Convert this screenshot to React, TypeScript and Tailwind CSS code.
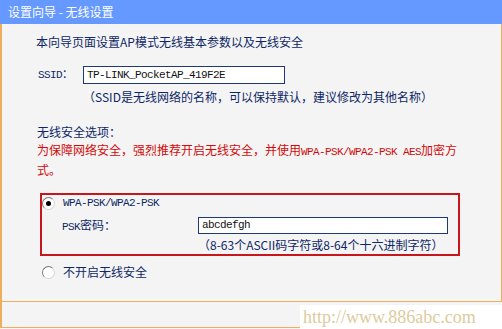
const cjk = "font-['Noto_Sans_CJK_SC',sans-serif]";
const mono = "font-['Liberation_Mono','Noto_Sans_CJK_SC',monospace] text-[11px] tracking-[-0.6px]";

function Radio({ checked }: { checked?: boolean }) {
  return (
    <span className="flex h-[13px] w-[13px] shrink-0 items-center justify-center rounded-full border border-[#7a7a7a] border-b-[#d4d4d4] border-r-[#d4d4d4] bg-white">
      {checked && <span className="h-[5px] w-[5px] rounded-full bg-black" />}
    </span>
  );
}

export default function App() {
  return (
    <div className={`relative h-[329px] w-[502px] overflow-hidden bg-[#f4f4f4] text-[12px] text-[#0e2766] ${cjk}`}>
      <div className="h-[24px] bg-[#6699ff] pl-[8px] leading-[24px] text-white">
        设置向导 - 无线设置
      </div>

      <div className="h-[278px] border-b border-l-2 border-r border-[#efae5c] pl-[34px] pt-[9px]">
        <div className="h-[18px] leading-[18px]">本向导页面设置AP模式无线基本参数以及无线安全</div>

        <div className="mt-[15px] flex h-[18px] items-center">
          <span className={`ml-[2px] w-[45px] ${mono}`}>SSID：</span>
          <div className={`flex h-[18px] w-[202px] items-center border border-[#1d3a78] bg-white pl-[3px] text-[#111] ${mono}`}>
            TP-LINK_PocketAP_419F2E
          </div>
        </div>

        <div className="ml-[47px] mt-[4px] h-[18px] leading-[18px]">
          （SSID是无线网络的名称，可以保持默认，建议修改为其他名称）
        </div>

        <div className="ml-[1px] mt-[17px] h-[18px] leading-[18px]">无线安全选项：</div>
        <p className="ml-[1px] w-[424px] leading-[18px] text-[#d20a0a]">
          为保障网络安全，强烈推荐开启无线安全，并使用<span className={`leading-[18px] ${mono}`}>WPA-PSK/WPA2-PSK AES</span>加密方式。
        </p>

        <div className="ml-[4px] mt-[14px] h-[63px] w-[420px] border-2 border-[#c8161d]">
          <div className="flex h-[16px] items-center gap-[8px]">
            <Radio checked />
            <span className={mono}>WPA-PSK/WPA2-PSK</span>
          </div>
          <div className="mt-[6px] flex h-[17px] items-center pl-[20px]">
            <span className="w-[136px]">
              <span className={mono}>PSK</span>密码：
            </span>
            <div className={`flex h-[17px] w-[250px] items-center border border-[#1d3a78] bg-white pl-[3px] text-[#111] ${mono}`}>
              abcdefgh
            </div>
          </div>
          <div className="mt-[2px] h-[18px] pl-[156px] leading-[18px]">
            （8-63个ASCII码字符或8-64个十六进制字符）
          </div>
        </div>

        <div className="ml-[6px] mt-[7px] flex h-[18px] items-center gap-[8px]">
          <Radio />
          <span>不开启无线安全</span>
        </div>
      </div>

      <div className="h-[26px] border-b border-l-2 border-[#efae5c]" />

      <div className="absolute bottom-0 right-0 flex h-[24px] w-[202px] items-center bg-white pl-[3px] font-['Liberation_Serif',serif] text-[18px] text-[#dccb9c]">
        http://www.886abc.com
      </div>
    </div>
  );
}
